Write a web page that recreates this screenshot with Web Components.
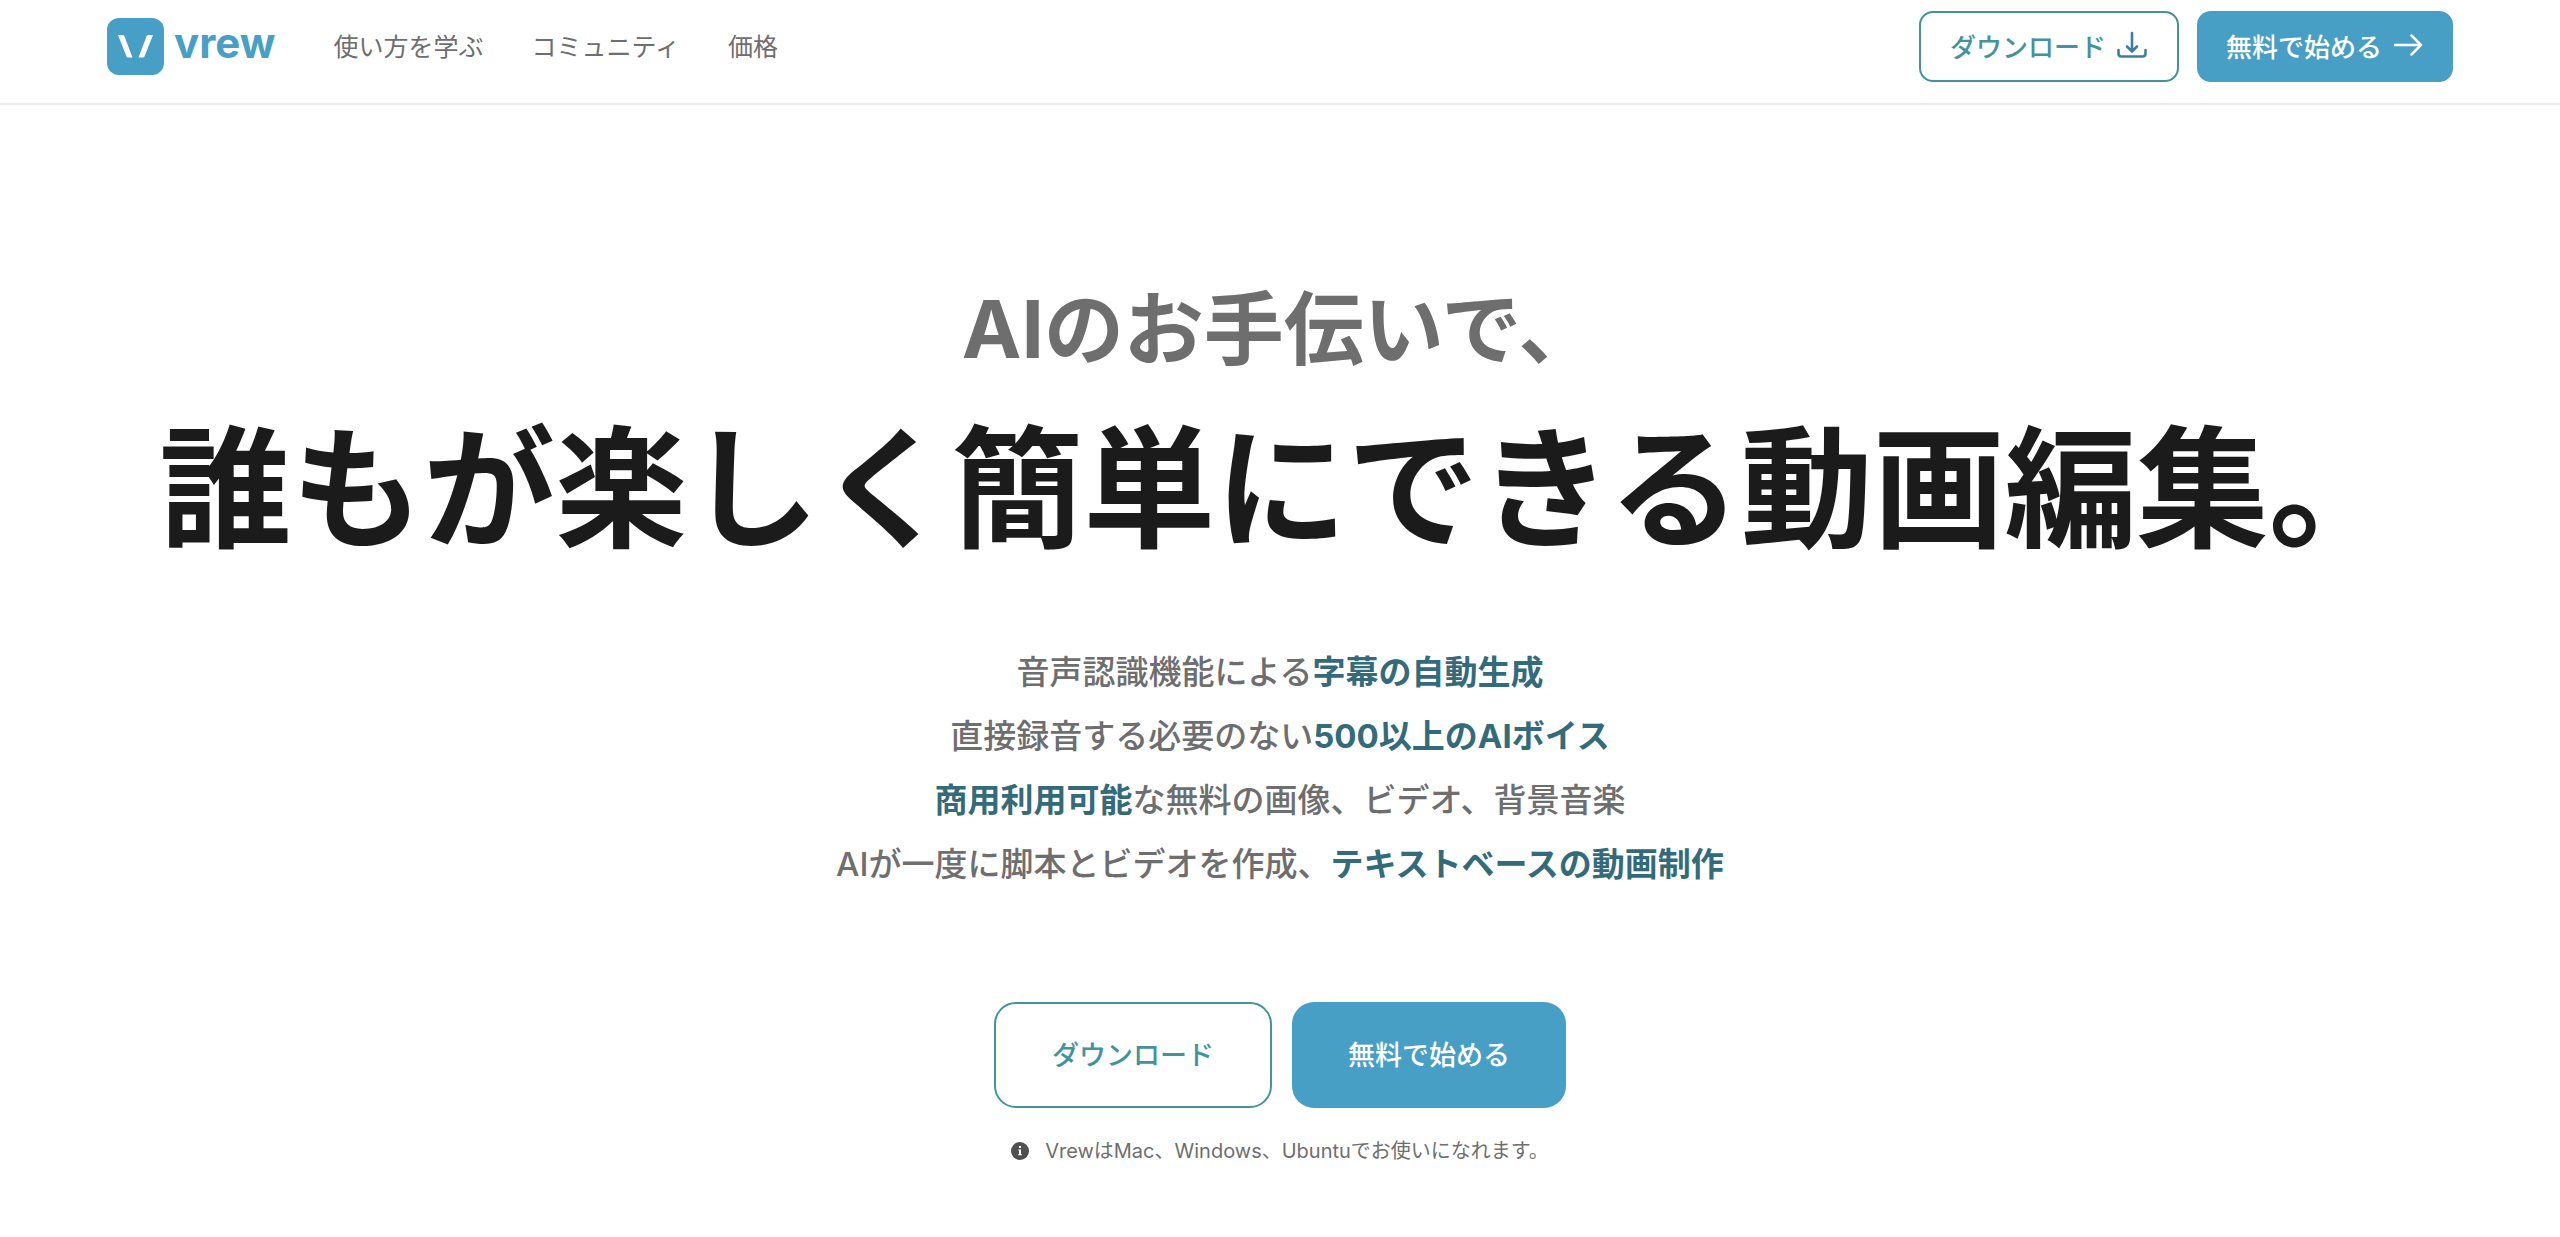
<!DOCTYPE html>
<html lang="ja">
<head>
<meta charset="utf-8">
<meta name="viewport" content="width=device-width, initial-scale=1">
<title>Vrew</title>
<style>
  body {
    margin: 0;
    background: #fff;
    color: #6e6e6e;
    font-family: Inter, "Noto Sans CJK JP", sans-serif;
  }
</style>
</head>
<body>
<vrew-header>
  <vrew-logo slot="logo"></vrew-logo>
  <vrew-nav-link href="#learn">使い方を学ぶ</vrew-nav-link>
  <vrew-nav-link href="#community">コミュニティ</vrew-nav-link>
  <vrew-nav-link href="#pricing">価格</vrew-nav-link>
  <vrew-button slot="actions" variant="outline" icon="download">ダウンロード</vrew-button>
  <vrew-button slot="actions" variant="solid" icon="arrow">無料で始める</vrew-button>
</vrew-header>
<vrew-hero>
  <span slot="lead">AIのお手伝いで、</span>
  <span slot="title">誰もが楽しく簡単にできる動画編集。</span>
  <vrew-feature>音声認識機能による<b>字幕の自動生成</b></vrew-feature>
  <vrew-feature>直接録音する必要のない<b>500以上のAIボイス</b></vrew-feature>
  <vrew-feature><b>商用利用可能</b>な無料の画像、ビデオ、背景音楽</vrew-feature>
  <vrew-feature>AIが一度に脚本とビデオを作成、<b>テキストベースの動画制作</b></vrew-feature>
  <vrew-button slot="actions" variant="outline" size="large">ダウンロード</vrew-button>
  <vrew-button slot="actions" variant="solid" size="large">無料で始める</vrew-button>
  <vrew-note slot="note">VrewはMac、Windows、Ubuntuでお使いになれます。</vrew-note>
</vrew-hero>

<script>
const ICONS = {
  download: `
    <svg viewBox="0 0 32 32" width="32" height="32" fill="none" stroke="#3a7fa0" stroke-width="2.600" stroke-linecap="round" stroke-linejoin="round" aria-hidden="true">
      <path d="M16 4v18M11 17.500L16 22.500l5-5M2.500 21v3.500q0 3 3 3h21q3 0 3-3V21"/>
    </svg>`,
  arrow: `
    <svg viewBox="0 0 32 32" width="32" height="32" fill="none" stroke="#fff" stroke-width="2.500" stroke-linecap="round" stroke-linejoin="round" aria-hidden="true">
      <path d="M3 16h26M19.500 6.500L29 16l-9.500 9.500"/>
    </svg>`
}

customElements.define('vrew-logo',
  /**
   * The logo mark with the word beside it.
   */
  class extends HTMLElement {
    constructor () {
      super()
      this.attachShadow({ mode: 'open' })
      this.shadowRoot.innerHTML = `
      <style>
      :host {
        display: block;
      }
      a {
        display: flex;
        align-items: center;
        gap: 10px;
        color: #489fc5;
        text-decoration: none;
      }
      svg {
        display: block;
      }
      span {
        font-size: 42px;
        font-weight: 700;
        line-height: 50px;
        padding-bottom: 7px;
      }
      </style>
      <a href="#top">
        <svg viewBox="0 0 57 57" width="57" height="57" aria-hidden="true">
          <rect width="57" height="57" rx="12" fill="#489fc5"/>
          <path d="M11 17h4.500q1.300 0 1.900 1.200L25.500 39.500H21.500q-1.500 0-2.100-1.300z" fill="#fff"/>
          <path d="M46 17h-4.500q-1.300 0-1.900 1.200L31.500 39.500h4q1.500 0 2.100-1.300z" fill="#fff"/>
        </svg>
        <span>vrew</span>
      </a>
    `
    }
  })

customElements.define('vrew-nav-link',
  /**
   * One text link of the header.
   */
  class extends HTMLElement {
    constructor () {
      super()
      this.attachShadow({ mode: 'open' })
    }

    /**
     * Runs when the element is connected to the DOM.
     */
    connectedCallback () {
      this.shadowRoot.innerHTML = `
      <style>
      :host {
        display: block;
      }
      a {
        color: #6e6e6e;
        font-size: 25px;
        line-height: 36px;
        text-decoration: none;
        white-space: nowrap;
      }
      a:hover {
        color: #489fc5;
      }
      </style>
      <a href="${this.getAttribute('href')}"><slot></slot></a>
    `
    }
  })

customElements.define('vrew-button',
  /**
   * Button in an outline or a solid variant, with an optional icon.
   */
  class extends HTMLElement {
    constructor () {
      super()
      this.attachShadow({ mode: 'open' })
    }

    /**
     * Runs when the element is connected to the DOM.
     */
    connectedCallback () {
      this.shadowRoot.innerHTML = `
      <style>
      :host {
        display: block;
      }
      button {
        box-sizing: border-box;
        display: flex;
        align-items: center;
        gap: 10px;
        height: 71px;
        padding: 0 29px 3px;
        border: 0;
        border-radius: 14px;
        background: #489fc5;
        color: #fff;
        font: inherit;
        font-size: 26px;
        font-weight: 500;
        white-space: nowrap;
        cursor: pointer;
      }
      svg {
        display: block;
      }
      :host([variant="outline"]) button {
        border: 2px solid #43929f;
        background: #fff;
        color: #43929f;
      }
      :host([size="large"]) button {
        height: 106px;
        padding: 0 56px 4px;
        border-radius: 22px;
        font-size: 27px;
      }
      </style>
      <button type="button"><slot></slot>${ICONS[this.getAttribute('icon')] || ''}</button>
    `
    }
  })

customElements.define('vrew-header',
  /**
   * Top bar: logo, links and actions.
   */
  class extends HTMLElement {
    constructor () {
      super()
      this.attachShadow({ mode: 'open' })
      this.shadowRoot.innerHTML = `
      <style>
      :host {
        display: block;
        border-bottom: 2px solid #ececec;
      }
      header {
        display: flex;
        align-items: center;
        padding: 11px 107px 21px;
      }
      nav {
        display: flex;
        gap: 48px;
        margin-left: 58px;
      }
      .actions {
        display: flex;
        gap: 18px;
        margin-left: auto;
      }
      </style>
      <header>
        <slot name="logo"></slot>
        <nav><slot></slot></nav>
        <div class="actions"><slot name="actions"></slot></div>
      </header>
    `
    }
  })

customElements.define('vrew-feature',
  /**
   * One line of the feature list, with its key words in bold.
   */
  class extends HTMLElement {
    constructor () {
      super()
      this.attachShadow({ mode: 'open' })
      this.shadowRoot.innerHTML = `
      <style>
      :host {
        display: block;
      }
      p {
        margin: 0;
        font-size: 33px;
        font-weight: 500;
        line-height: 64px;
      }
      ::slotted(b) {
        color: #336b7a;
        font-weight: 700;
      }
      </style>
      <p><slot></slot></p>
    `
    }
  })

customElements.define('vrew-note',
  /**
   * Small print with an info mark.
   */
  class extends HTMLElement {
    constructor () {
      super()
      this.attachShadow({ mode: 'open' })
      this.shadowRoot.innerHTML = `
      <style>
      :host {
        display: flex;
        align-items: center;
        gap: 16px;
        font-size: 20px;
        line-height: 30px;
      }
      svg {
        display: block;
      }
      </style>
      <svg viewBox="0 0 18 18" width="18" height="18" aria-hidden="true">
        <circle cx="9" cy="9" r="9" fill="#505050"/>
        <path d="M8 4h2v2H8zM7.500 7.500H10V12h.7v1.300H7.300V12H8V8.700h-.5z" fill="#fff"/>
      </svg>
      <span><slot></slot></span>
    `
    }
  })

customElements.define('vrew-hero',
  /**
   * Headline, features and the main actions.
   */
  class extends HTMLElement {
    constructor () {
      super()
      this.attachShadow({ mode: 'open' })
      this.shadowRoot.innerHTML = `
      <style>
      :host {
        display: block;
      }
      main {
        display: flex;
        flex-direction: column;
        align-items: center;
        padding: 174px 20px 40px;
        text-align: center;
      }
      h1 {
        display: flex;
        flex-direction: column;
        gap: 30px;
        margin: 0;
        font-weight: 700;
      }
      .lead {
        font-size: 80px;
        line-height: 100px;
      }
      .title {
        color: #1b1b1b;
        font-size: 132px;
        line-height: 160px;
      }
      .features {
        margin-top: 71px;
      }
      .actions {
        display: flex;
        gap: 20px;
        margin: 106px 0 28px;
      }
      </style>
      <main>
        <h1>
          <span class="lead"><slot name="lead"></slot></span>
          <span class="title"><slot name="title"></slot></span>
        </h1>
        <div class="features"><slot></slot></div>
        <div class="actions"><slot name="actions"></slot></div>
        <slot name="note"></slot>
      </main>
    `
    }
  })
</script>
</body>
</html>
